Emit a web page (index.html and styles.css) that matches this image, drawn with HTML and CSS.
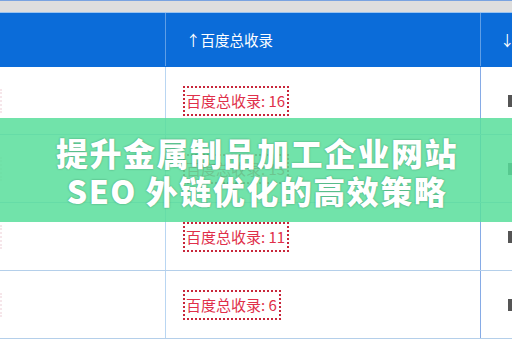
FILE: index.html
```html
<!DOCTYPE html>
<html>
<head>
<meta charset="utf-8">
<link rel="stylesheet" href="styles.css">
</head>
<body>
<div class="page">
  <div class="topbar"></div>
  <div class="table">
    <div class="row head">
      <div class="cell c1"></div>
      <div class="cell c2"><span class="th">↑百度总收录</span></div>
      <div class="cell c3"><span class="th">↓标</span></div>
    </div>
    <div class="row">
      <div class="cell c1"><span class="ghost"></span></div>
      <div class="cell c2"><span class="tag">百度总收录: 16</span></div>
      <div class="cell c3"><span class="mark"></span></div>
    </div>
    <div class="row">
      <div class="cell c1"><span class="ghost"></span></div>
      <div class="cell c2"><span class="tag">百度总收录: 13</span></div>
      <div class="cell c3"><span class="mark"></span></div>
    </div>
    <div class="row">
      <div class="cell c1"><span class="ghost"></span></div>
      <div class="cell c2"><span class="tag">百度总收录: 11</span></div>
      <div class="cell c3"><span class="mark"></span></div>
    </div>
    <div class="row">
      <div class="cell c1"><span class="ghost"></span></div>
      <div class="cell c2"><span class="tag">百度总收录: 6</span></div>
      <div class="cell c3"><span class="mark"></span></div>
    </div>
  </div>
  <div class="banner">
    <div class="title">提升金属制品加工企业网站<br>SEO 外链优化的高效策略</div>
  </div>
</div>
</body>
</html>
```
FILE: styles.css
```css
html, body {
  margin: 0;
  padding: 0;
  background: #ffffff;
}
.page {
  position: relative;
  width: 512px;
  height: 340px;
  overflow: hidden;
  font-family: "Noto Sans CJK SC", "Microsoft YaHei", sans-serif;
}
.topbar {
  height: 11px;
  background: #dedede;
  border-top: 1px solid #7aa3e0;
  border-bottom: 1px solid #9cc4f0;
}
.table {
  display: flex;
  flex-direction: column;
}
.row {
  display: grid;
  grid-template-columns: 166px 315px 1fr;
  height: 68px;
  border-bottom: 1px solid #b4cfea;
  box-sizing: border-box;
}
.row.head {
  height: 54px;
  background: #0b6cd9;
  border-bottom: 1px solid #0b6cd9;
}
.cell {
  display: flex;
  align-items: center;
  box-sizing: border-box;
  white-space: nowrap;
  overflow: hidden;
}
.c1 {
  border-right: 1px solid #b9d6f2;
}
.head .c1 {
  border-right: 1px solid #5f9ee6;
}
.c2 {
  padding-left: 17px;
  border-right: 1px solid #86abe6;
}
.head .c2 {
  padding-left: 20px;
  border-right: 1px solid #5f9ee6;
}
.c3 {
  padding-left: 27px;
}
.head .c3 {
  padding-left: 19px;
}
.th {
  color: #ffffff;
  font-size: 14.5px;
  font-family: "Noto Sans CJK SC", sans-serif;
}
.tag {
  display: inline-block;
  border: 2px dotted #c8263a;
  padding: 3px 2px 3px 1px;
  color: #e0304a;
  font-size: 15px;
  line-height: 20px;
  font-family: "Noto Sans CJK SC", sans-serif;
}
.mark {
  display: inline-block;
  width: 4px;
  height: 12px;
  background: #555555;
}
.ghost {
  display: inline-block;
  width: 3px;
  height: 24px;
  border-right: 2px dotted #f6e6ea;
  margin-left: -3px;
}
.banner {
  position: absolute;
  left: 0;
  top: 118px;
  width: 512px;
  height: 104px;
  background: rgba(88, 222, 155, 0.85);
  display: flex;
  align-items: center;
  justify-content: center;
}
.title {
  color: #ffffff;
  font-family: "Noto Sans CJK SC", sans-serif;
  font-weight: 900;
  font-size: 32px;
  line-height: 38px;
  letter-spacing: 1.5px;
  text-align: center;
  margin-top: 2px;
  margin-left: 2px;
  text-shadow: 0 0 2px rgba(0, 60, 30, 0.45);
}
```
